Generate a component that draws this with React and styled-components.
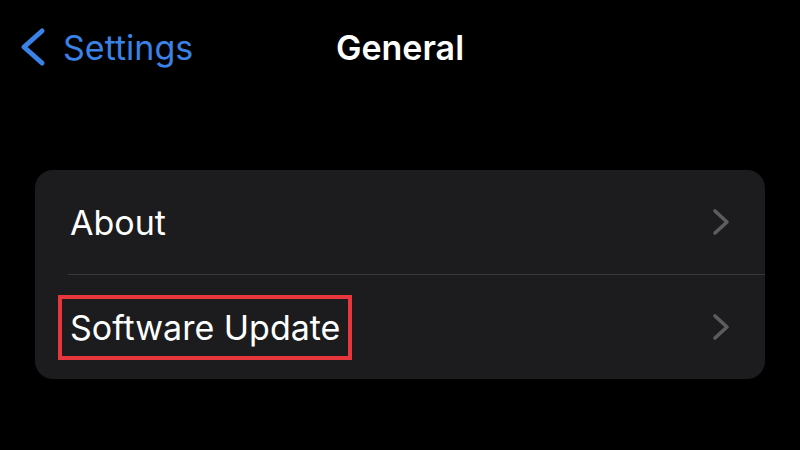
import React from 'react';
import styled, { createGlobalStyle } from 'styled-components';

const GlobalStyle = createGlobalStyle`
  html, body {
    margin: 0;
    padding: 0;
    background: #000;
  }
  body {
    font-family: Inter, "Noto Sans", sans-serif;
    -webkit-font-smoothing: antialiased;
  }
`;

const Screen = styled.div`
  width: 800px;
  height: 450px;
  background: #000;
  overflow: hidden;
  display: flex;
  flex-direction: column;
`;

const NavBar = styled.div`
  position: relative;
  height: 94px;
  display: flex;
  align-items: center;
  padding-left: 20px;
`;

const BackButton = styled.div`
  display: flex;
  align-items: center;
  gap: 17px;
  color: #3a82e6;
  font-size: 34px;
`;

const Title = styled.div`
  position: absolute;
  left: 0;
  right: 0;
  top: 0;
  bottom: 0;
  display: flex;
  align-items: center;
  justify-content: center;
  color: #fff;
  font-size: 34px;
  font-weight: 600;
  pointer-events: none;
`;

const Group = styled.div`
  margin: 76px 35px 0;
  background: #1c1c1e;
  border-radius: 18px;
  overflow: hidden;
`;

const Row = styled.div`
  height: 104px;
  display: flex;
  align-items: center;
  justify-content: space-between;
  padding: 0 35px;
  margin-left: ${p => (p.$divided ? '33px' : '0')};
  padding-left: ${p => (p.$divided ? '2px' : '35px')};
  border-top: ${p => (p.$divided ? '1px solid #38383a' : 'none')};
`;

const Label = styled.span`
  color: #fff;
  font-size: 34px;
  line-height: 57px;
  ${p =>
    p.$highlight &&
    `
    border: 4px solid #e8373c;
    padding: 0 8px;
    margin-left: -12px;
  `}
`;

const Chevron = () => (
  <svg width="18" height="28" viewBox="0 0 18 28" fill="none">
    <polyline
      points="3,3 15,14 3,25"
      stroke="#5c5c60"
      strokeWidth="3.6"
      strokeLinecap="round"
      strokeLinejoin="round"
    />
  </svg>
);

const BackChevron = () => (
  <svg width="26" height="40" viewBox="0 0 26 40" fill="none">
    <polyline
      points="22,4 4,20 22,36"
      stroke="#3a82e6"
      strokeWidth="5"
      strokeLinecap="round"
      strokeLinejoin="round"
    />
  </svg>
);

const items = [
  { label: 'About' },
  { label: 'Software Update', highlight: true },
];

const App = () => (
  <>
    <GlobalStyle />
    <Screen>
      <NavBar>
        <BackButton>
          <BackChevron />
          <span>Settings</span>
        </BackButton>
        <Title>General</Title>
      </NavBar>
      <Group>
        {items.map((item, i) => (
          <Row key={item.label} $divided={i > 0}>
            <Label $highlight={item.highlight}>{item.label}</Label>
            <Chevron />
          </Row>
        ))}
      </Group>
    </Screen>
  </>
);

export default App;
